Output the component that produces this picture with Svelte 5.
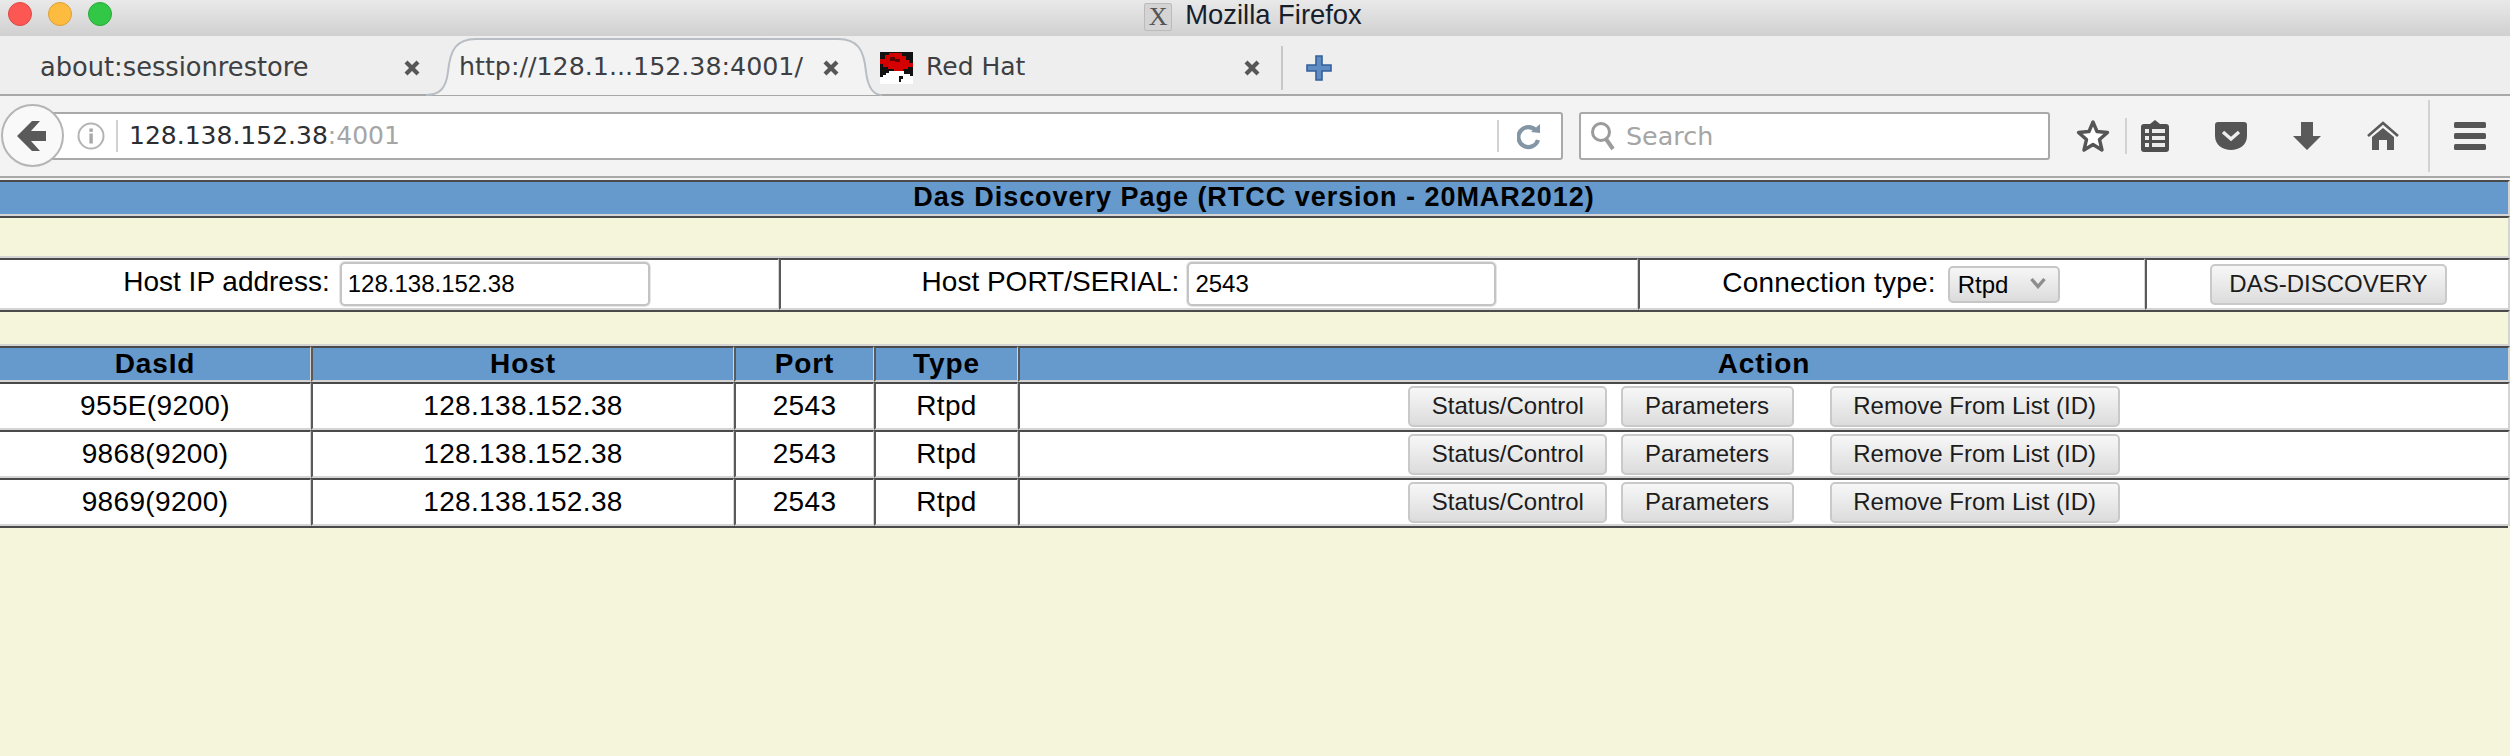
<script>
  const rows = ["955E(9200)", "9868(9200)", "9869(9200)"];
  const heads = ["DasId", "Host", "Port", "Type", "Action"];
</script>

{#snippet closeIcon()}
  <svg class="close" width="16" height="16" viewBox="0 0 16 16">
    <path d="M2 2 14 14M14 2 2 14" stroke="#575757" stroke-width="4.2" fill="none" />
  </svg>
{/snippet}

<div class="chrome">
  <header class="titlebar">
    <div class="lights">
      <span class="light red"></span>
      <span class="light yellow"></span>
      <span class="light green"></span>
    </div>
    <div class="wintitle">
      <span class="xicon">X</span>
      <span>Mozilla Firefox</span>
    </div>
  </header>

  <div class="tabstrip">
    <div class="tab tab1">
      <span class="tabtext">about:sessionrestore</span>
      {@render closeIcon()}
    </div>
    <div class="tab tab2">
      <svg class="tabshape" width="456" height="60" viewBox="0 0 456 60">
        <path
          d="M0 59C14 59 20 52 22 36 24 14 30 3 50 3H412C432 3 438 14 440 36 442 52 448 59 456 59"
          fill="#f3f3f3"
          stroke="#b7bdc3"
          stroke-width="2"
        />
      </svg>
      <span class="tabtext">http://128.1...152.38:4001/</span>
      {@render closeIcon()}
    </div>
    <div class="tab tab3">
      <svg class="favicon" width="33" height="32" viewBox="0 0 33 32" shape-rendering="crispEdges">
        <rect width="33" height="32" fill="#fff" />
        <rect width="33" height="19" fill="#111" />
        <path
          d="M9 1H22V4H26V8H29V11H33V15H28V17H23V19H14V17H8V15H3V12H0V7H5V3H9Z"
          fill="#d40000"
        />
        <path d="M10 5H15V7H20V10H15V9H10Z" fill="#5c0000" />
        <path d="M0 19H9V21H6V23H3V25H0ZM24 19H33V24H30V22H24ZM19 24H23V27H21V30H19Z" fill="#111" />
      </svg>
      <span class="tabtext">Red Hat</span>
      {@render closeIcon()}
    </div>
    <span class="tabsep"></span>
    <svg class="plus" width="26" height="26" viewBox="0 0 26 26">
      <path
        d="M10 1H16V10H25V16H16V25H10V16H1V10H10Z"
        fill="#5f8cc2"
        stroke="#33609b"
        stroke-width="1.6"
      />
    </svg>
  </div>

  <div class="toolbar">
    <button class="back" aria-label="Back">
      <svg width="30" height="32" viewBox="0 0 30 32">
        <path d="M16 1 24 1 15 11H30V21H15L24 31H16L1 16Z" fill="#5a5a5a" />
      </svg>
    </button>
    <div class="urlbar">
      <svg class="info" width="28" height="28" viewBox="0 0 28 28">
        <circle cx="14" cy="14" r="12.5" fill="none" stroke="#b4b4b4" stroke-width="2" />
        <rect x="12.4" y="11.5" width="3.4" height="10" fill="#a8a8a8" />
        <rect x="12.4" y="6.5" width="3.4" height="3.4" fill="#a8a8a8" />
      </svg>
      <span class="urlsep"></span>
      <span class="url">128.138.152.38<span class="port">:4001</span></span>
      <span class="urlsep reloadsep"></span>
      <svg class="reload" width="24" height="28" viewBox="0 0 24 28">
        <path d="M19 8.5A10 10 0 1 0 21 18" fill="none" stroke="#8495a5" stroke-width="4.2" />
        <path d="M14 10 23 2V11Z" fill="#8495a5" />
      </svg>
    </div>
    <div class="searchbar">
      <svg width="26" height="30" viewBox="0 0 26 30">
        <circle cx="11" cy="11" r="8.5" fill="none" stroke="#9b9b9b" stroke-width="3" />
        <path d="M16 18 23 28" stroke="#9b9b9b" stroke-width="4" />
      </svg>
      <span class="searchtext">Search</span>
    </div>
    <div class="tools">
      <svg class="star" width="34" height="34" viewBox="0 0 34 34">
        <path
          d="M17 3 21 12.5 31.5 13.5 23.5 20.5 26 31 17 25.5 8 31 10.5 20.5 2.5 13.5 13 12.5Z"
          fill="#fff"
          stroke="#555"
          stroke-width="3.4"
          stroke-linejoin="round"
        />
      </svg>
      <span class="toolsep short"></span>
      <svg class="clip" width="28" height="32" viewBox="0 0 28 32">
        <path d="M14 0 19 4H25Q28 4 28 7V29Q28 32 25 32H3Q0 32 0 29V7Q0 4 3 4H9Z" fill="#4f4f4f" />
        <path
          d="M4 9H8V13H4ZM11 9H24V13H11ZM4 16H8V20H4ZM11 16H24V20H11ZM4 23H8V27H4ZM11 23H24V27H11Z"
          fill="#ececec"
        />
      </svg>
      <svg class="pocket" width="32" height="30" viewBox="0 0 32 30">
        <path
          d="M3 1H29Q32 1 32 4V15C32 24 24 29 16 29 8 29 0 24 0 15V4Q0 1 3 1Z"
          fill="#555"
        />
        <path d="M8 11 16 18 24 11" fill="none" stroke="#eee" stroke-width="3.4" />
      </svg>
      <svg class="down" width="28" height="30" viewBox="0 0 28 30">
        <path d="M8 1H20V15H28L14 29 0 15H8Z" fill="#5a5a5a" />
      </svg>
      <svg class="home" width="32" height="30" viewBox="0 0 32 30">
        <path d="M1 15 16 2 31 15" fill="none" stroke="#5a5a5a" stroke-width="2.6" />
        <path d="M16 7 27 16V29H20V19H12V29H5V16Z" fill="#5a5a5a" />
      </svg>
      <span class="toolsep tall"></span>
      <svg class="menu" width="32" height="28" viewBox="0 0 32 28">
        <rect y="0" width="32" height="6" rx="1.5" fill="#555" />
        <rect y="11" width="32" height="6" rx="1.5" fill="#555" />
        <rect y="22" width="32" height="6" rx="1.5" fill="#555" />
      </svg>
    </div>
  </div>
</div>

<main class="page">
  <h1 class="cellbox pagetitle">Das Discovery Page (RTCC version - 20MAR2012)</h1>
  <div class="cellbox spacer first"></div>

  <table class="formtable">
    <colgroup>
      <col style="width: 779px" />
      <col style="width: 859px" />
      <col style="width: 507px" />
      <col />
    </colgroup>
    <tbody>
      <tr>
        <td class="ipcell">Host IP address:<input class="ipinput" value="128.138.152.38" /></td>
        <td>Host PORT/SERIAL:<input class="portinput" value="2543" /></td>
        <td class="conncell">
          Connection type:<span class="selectwrap">
            <select><option>Rtpd</option></select>
            <svg width="16" height="12" viewBox="0 0 16 12">
              <path d="M1.5 2 8 9.5 14.5 2" fill="none" stroke="#8d8d8d" stroke-width="3.4" />
            </svg>
          </span>
        </td>
        <td class="disccell"><button class="btn discovery">DAS-DISCOVERY</button></td>
      </tr>
    </tbody>
  </table>

  <div class="cellbox spacer second"></div>

  <table class="datatable">
    <colgroup>
      <col style="width: 311px" />
      <col style="width: 423px" />
      <col style="width: 140px" />
      <col style="width: 144px" />
      <col />
    </colgroup>
    <thead>
      <tr>
        {#each heads as head}
          <th>{head}</th>
        {/each}
      </tr>
    </thead>
    <tbody>
      {#each rows as id}
        <tr>
          <td>{id}</td>
          <td>128.138.152.38</td>
          <td>2543</td>
          <td>Rtpd</td>
          <td class="actions">
            <button class="btn">Status/Control</button>
            <button class="btn">Parameters</button>
            <button class="btn remove">Remove From List (ID)</button>
          </td>
        </tr>
      {/each}
    </tbody>
  </table>
  <div class="tableend"></div>
</main>

<style>
  :global(body) {
    margin: 0;
    background: #f5f5dc;
    overflow: hidden;
  }

  .chrome {
    font-family: "DejaVu Sans", sans-serif;
    background: #f3f3f3;
    padding-bottom: 2px;
  }

  .titlebar {
    height: 36px;
    display: flex;
    align-items: center;
    justify-content: center;
    position: relative;
    background: linear-gradient(#e9e9e9, #d0d0d0);
  }

  .lights {
    position: absolute;
    left: 8px;
    top: 2px;
    display: flex;
    gap: 16px;
  }

  .light {
    width: 22px;
    height: 22px;
    border-radius: 50%;
    border: 1px solid;
  }

  .red {
    background: #fc5753;
    border-color: #df4744;
  }

  .yellow {
    background: #fdbc40;
    border-color: #de9f34;
  }

  .green {
    background: #33c748;
    border-color: #27aa35;
  }

  .wintitle {
    display: flex;
    align-items: center;
    gap: 13px;
    font-family: "Liberation Sans", sans-serif;
    font-size: 27.4px;
    line-height: 30px;
    color: #16202c;
    margin: -6px 0 0 -4px;
  }

  .xicon {
    width: 28px;
    height: 28px;
    margin-top: 4px;
    background: #d4d4d4;
    border: 1px solid #bbb;
    box-sizing: border-box;
    border-radius: 2px;
    color: #555;
    font-family: "Liberation Serif", serif;
    font-size: 26px;
    line-height: 26px;
    text-align: center;
  }

  .tabstrip {
    height: 60px;
    box-sizing: border-box;
    display: flex;
    align-items: center;
    background: #eeeeee;
    border-bottom: 2px solid #a8a8a8;
  }

  .tab {
    height: 58px;
    display: flex;
    align-items: center;
    position: relative;
    box-sizing: border-box;
  }

  .tabtext {
    position: relative;
    font-size: 25px;
    color: #3d3f42;
    white-space: nowrap;
    margin-top: 3px;
  }

  .close {
    position: absolute;
    top: 24px;
  }

  .tab1 {
    width: 430px;
    padding-left: 40px;
  }

  .tab1 .tabtext {
    font-size: 25.7px;
  }

  .tab1 .close {
    left: 404px;
  }

  .tab2 {
    width: 450px;
    padding-left: 29px;
  }

  .tab2 .tabtext {
    font-size: 25.3px;
  }

  .tab2 .close {
    left: 393px;
  }

  .tabshape {
    position: absolute;
    left: -4px;
    top: 0;
  }

  .tab3 {
    width: 401px;
    padding-left: 0;
  }

  .tab3 .close {
    left: 364px;
  }

  .favicon {
    margin: 5px 13px 0 0;
    position: relative;
  }

  .tabsep {
    width: 2px;
    height: 44px;
    background: #c8c8c8;
    margin-top: 6px;
  }

  .plus {
    margin: 6px 0 0 23px;
  }

  .toolbar {
    height: 82px;
    box-sizing: border-box;
    display: flex;
    align-items: center;
    border-bottom: 2px solid #a8a8a8;
    background: #f3f3f3;
    padding-left: 1px;
  }

  .back {
    width: 63px;
    height: 63px;
    box-sizing: border-box;
    flex: none;
    padding: 0 4px 0 0;
    border: 2px solid #b5b5b5;
    border-radius: 50%;
    background: #f9f9f9;
    display: grid;
    place-items: center;
    position: relative;
    z-index: 1;
    margin-top: -1px;
  }

  .urlbar {
    width: 1523px;
    height: 48px;
    margin: -1px 0 0 -24px;
    padding-left: 37px;
    box-sizing: border-box;
    display: flex;
    align-items: center;
    flex: none;
    background: #fff;
    border: 2px solid #a9a9a9;
    border-left: none;
    border-radius: 3px;
  }

  .info {
    flex: none;
  }

  .urlsep {
    width: 2px;
    height: 32px;
    background: #d2d2d2;
    margin-left: 11px;
    flex: none;
  }

  .url {
    margin-left: 11px;
    font-size: 25px;
    color: #2b2d30;
  }

  .port {
    color: #a5a5a5;
  }

  .reloadsep {
    margin-left: auto;
  }

  .reload {
    margin: 0 20px 0 18px;
    flex: none;
  }

  .searchbar {
    width: 471px;
    height: 48px;
    margin: -1px 0 0 16px;
    padding-left: 9px;
    box-sizing: border-box;
    display: flex;
    align-items: center;
    gap: 10px;
    flex: none;
    background: #fff;
    border: 2px solid #a9a9a9;
    border-radius: 3px;
  }

  .searchtext {
    font-size: 25.4px;
    color: #a5a5a5;
  }

  .tools {
    display: flex;
    align-items: center;
    flex: none;
    margin-top: -1px;
  }

  .star {
    margin-left: 26px;
  }

  .toolsep {
    width: 2px;
    background: #d2d2d2;
    flex: none;
  }

  .short {
    height: 36px;
    margin: 0 14px 0 15px;
  }

  .tall {
    height: 72px;
    margin: 0 24px 0 29px;
  }

  .pocket {
    margin-left: 46px;
  }

  .down {
    margin-left: 46px;
  }

  .home {
    margin-left: 46px;
  }

  .page {
    font-family: "Liberation Sans", sans-serif;
    font-size: 28px;
    color: #000;
  }

  .cellbox {
    margin: 0;
    box-sizing: border-box;
    border-top: 2px solid #4a4a4a;
    border-right: 2px solid #d4d4d4;
    border-bottom: 2px solid #d4d4d4;
  }

  .pagetitle {
    height: 36px;
    background: #6699cc;
    font-size: 27px;
    font-weight: 700;
    line-height: 31px;
    text-align: center;
    letter-spacing: 0.97px;
    white-space: nowrap;
  }

  .spacer {
    background: #f5f5dc;
  }

  .first {
    height: 42px;
  }

  .second {
    height: 36px;
  }

  table {
    width: 100%;
    table-layout: fixed;
    border-spacing: 0;
    background: #fff;
  }

  td,
  th {
    box-sizing: border-box;
    padding: 0;
    text-align: center;
    white-space: nowrap;
    border-top: 2px solid #4a4a4a;
    border-right: 1px solid #d4d4d4;
    border-bottom: 2px solid #d4d4d4;
    border-left: 2px solid #5a5a5a;
  }

  td:first-child,
  th:first-child {
    border-left: none;
  }

  td:last-child,
  th:last-child {
    border-right: 2px solid #d4d4d4;
  }

  .formtable td {
    height: 52px;
  }

  .ipcell {
    padding-right: 5px;
  }

  .conncell {
    letter-spacing: 0.2px;
    padding-right: 2px;
  }

  .disccell {
    padding-left: 2px;
  }

  .datatable th {
    height: 36px;
    background: #6699cc;
    font-size: 28px;
    line-height: 30px;
    letter-spacing: 0.9px;
  }

  .datatable td {
    height: 48px;
    letter-spacing: 0.35px;
  }

  input {
    box-sizing: border-box;
    height: 44px;
    margin: 0 0 0 10px;
    padding: 0 6px;
    vertical-align: middle;
    font: 24px "Liberation Sans", sans-serif;
    color: #000;
    background: #fff;
    border: 2px solid #c4c4c4;
    border-radius: 5px;
    box-shadow: 0 0 0 1px #e6e6e6;
  }

  .ipinput {
    width: 310px;
  }

  .portinput {
    width: 309px;
    margin-left: 8px;
  }

  .selectwrap {
    display: inline-block;
    position: relative;
    margin-left: 12px;
    vertical-align: middle;
  }

  select {
    display: block;
    box-sizing: border-box;
    width: 112px;
    height: 37px;
    padding: 0 0 0 8px;
    font: 24px "Liberation Sans", sans-serif;
    color: #000;
    appearance: none;
    background: linear-gradient(#f6f6f6, #dcdcdc);
    border: 2px solid #c6c6c6;
    border-radius: 5px;
  }

  .selectwrap svg {
    position: absolute;
    right: 14px;
    top: 11px;
  }

  .btn {
    box-sizing: border-box;
    height: 41px;
    padding: 0;
    vertical-align: middle;
    font: 24px "Liberation Sans", sans-serif;
    color: #1c1c1c;
    background: linear-gradient(#f7f7f7, #dcdcdc);
    border: 2px solid #c9c9c9;
    border-radius: 5px;
    width: 199px;
  }

  .discovery {
    width: 237px;
  }

  .actions .btn + .btn {
    margin-left: 5px;
    width: 173px;
  }

  .actions .btn.remove {
    margin-left: 28px;
    width: 290px;
  }

  .tableend {
    height: 2px;
    background: #4a4a4a;
    margin-right: 2px;
  }
</style>
